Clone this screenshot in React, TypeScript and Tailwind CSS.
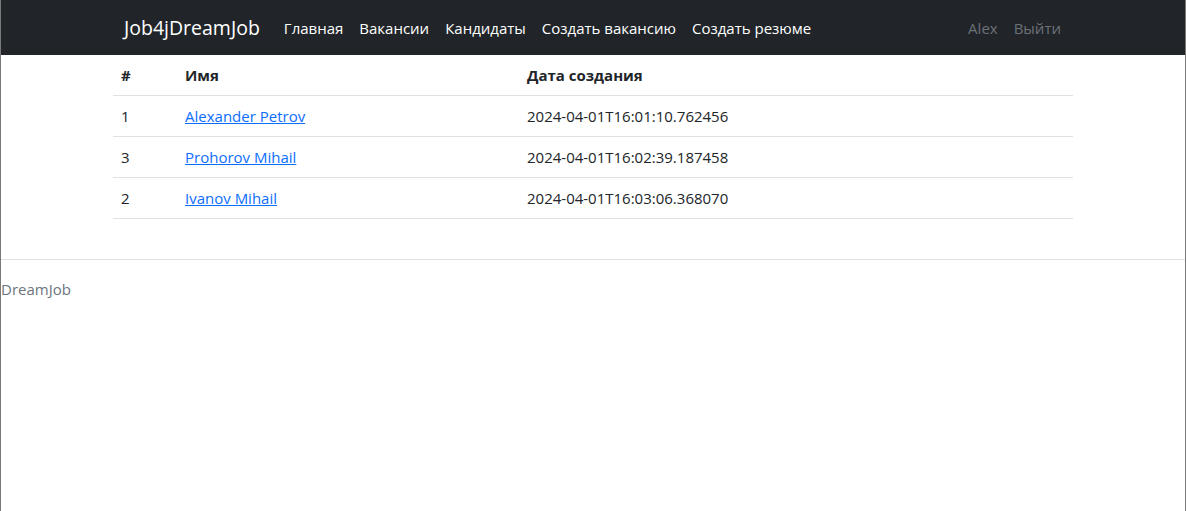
import React from "react";

const rows = [
  { id: 1, name: "Alexander Petrov", date: "2024-04-01T16:01:10.762456" },
  { id: 3, name: "Prohorov Mihail", date: "2024-04-01T16:02:39.187458" },
  { id: 2, name: "Ivanov Mihail", date: "2024-04-01T16:03:06.368070" },
];

export default function App() {
  return (
    <div
      className="min-h-[511px] bg-white border-l border-r border-[#7a7a7a] text-[#212529] text-[15px] leading-6"
      style={{ fontFamily: '"Open Sans", "Noto Sans", sans-serif' }}
    >
      <nav className="h-[55px] bg-[#212529] flex items-center">
        <div className="w-[960px] mx-auto px-3 flex items-center">
          <a className="text-[19.5px] leading-[30px] text-white mr-4 ml-[-1px]">Job4jDreamJob</a>
          <div className="flex items-center">
            {["Главная", "Вакансии", "Кандидаты", "Создать вакансию", "Создать резюме"].map((t) => (
              <a key={t} className="px-2 text-white">
                {t}
              </a>
            ))}
          </div>
          <div className="ml-auto flex items-center gap-4 text-[#6c7078]">
            <a>Alex</a>
            <a>Выйти</a>
          </div>
        </div>
      </nav>
      <div className="w-[960px] mx-auto">
        <table className="w-full border-collapse mb-[40px]">
          <thead>
            <tr className="border-b border-[#dee2e6]">
              <th className="w-[64px] p-2 text-left font-bold">#</th>
              <th className="w-[342px] p-2 text-left font-bold">Имя</th>
              <th className="p-2 text-left font-bold">Дата создания</th>
            </tr>
          </thead>
          <tbody>
            {rows.map((r) => (
              <tr key={r.id} className="border-b border-[#dee2e6]">
                <td className="p-2">{r.id}</td>
                <td className="p-2">
                  <a className="text-[#0d6efd] underline">{r.name}</a>
                </td>
                <td className="p-2">{r.date}</td>
              </tr>
            ))}
          </tbody>
        </table>
      </div>
      <footer className="border-t border-[#dee2e6] pt-[17px]">
        <span className="text-[#6c757d]">DreamJob</span>
      </footer>
    </div>
  );
}
